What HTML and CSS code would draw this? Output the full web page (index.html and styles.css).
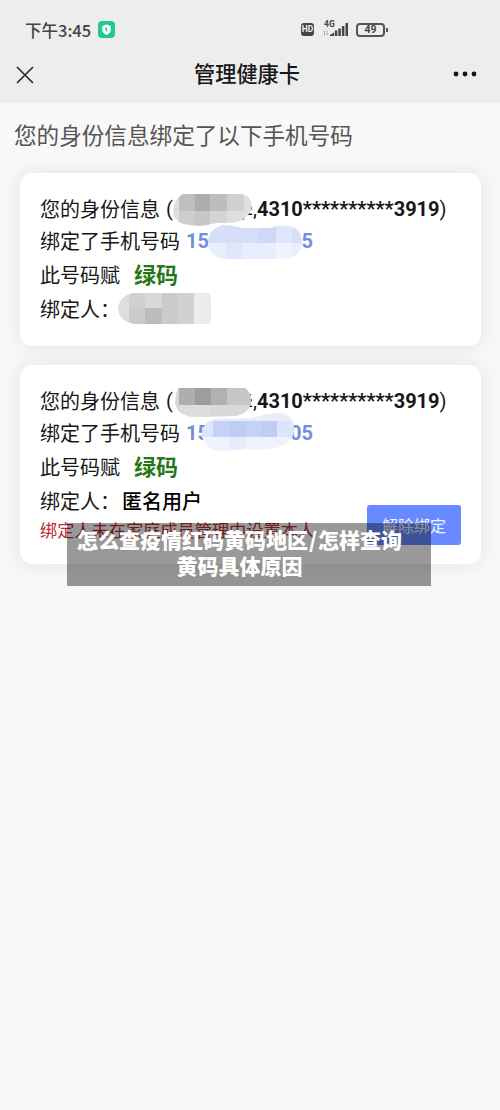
FILE: index.html
```html
<!DOCTYPE html>
<html lang="zh-CN">
<head>
<meta charset="utf-8">
<title>管理健康卡</title>
<link rel="stylesheet" href="styles.css">
</head>
<body>
<header class="top">
  <div class="status">
    <span class="time">下午3:45</span>
    <svg class="shield" width="17" height="17" viewBox="0 0 17 17"><rect width="17" height="17" rx="4" fill="#20cc8b"/><path d="M8.5 3.5 12.7 5v4c0 2.300-1.700 4-4.200 5C6 13 4.300 11.300 4.300 9V5z" fill="#fff"/><path d="M8.500 6.500v4M7 8h2" stroke="#20cc8b" stroke-width="1.300"/></svg>
    <span class="hd">HD</span>
    <span class="signal">
      <span class="net">4G</span>
      <svg width="28" height="16" viewBox="0 0 28 16"><g fill="#444"><path d="M8 14v-1l4-2.500v3.500z"/><rect x="12.800" y="8.500" width="2.500" height="5.500"/><rect x="16.300" y="6.500" width="2.500" height="7.500"/><rect x="19.900" y="4" width="2.500" height="10"/><rect x="23.500" y="1" width="2.500" height="13"/></g><path d="M2.500 14V9L1.500 10M5 8.500V13l1-1" fill="none" stroke="#aaa"/></svg>
    </span>
    <span class="battery">49</span>
  </div>
  <nav class="nav">
    <svg width="18" height="18" viewBox="0 0 18 18"><path d="M1 1 17 17M17 1 1 17" stroke="#2b2b2b" stroke-width="1.700"/></svg>
    <h1 class="title">管理健康卡</h1>
    <svg class="more" width="24" height="6" viewBox="0 0 24 6" fill="#151515"><circle cx="3" cy="3" r="2.400"/><circle cx="12" cy="3" r="2.400"/><circle cx="21" cy="3" r="2.400"/></svg>
  </nav>
</header>
<main class="main">
  <h2 class="intro">您的身份信息绑定了以下手机号码</h2>
  <section class="card">
    <div class="row first"><span class="lead">您的身份信息</span><span class="paren">(</span><span class="name">华</span><span>,</span><b>4310**********3919</b><span>)</span>
      <svg class="mosaic name-mask" width="80" height="33" viewBox="0 0 80 33"><clipPath id="a"><path d="M11 0H69Q77 1 79 8Q81 16 75 22Q69 28 59 29Q43 28 35 31Q26 33 12 30Q1 27 1 17Q2 5 11 0z"/></clipPath><g clip-path="url(#a)"><path fill="#dedede" d="M0 0h80v33H0z"/><path fill="#bfbfbf" d="M7 0h16v17H7z"/><path fill="#adadad" d="M23 0h15v17H23z"/><path fill="#bdbdbd" d="M38 0h17v17H38z"/><path fill="#d0d0d0" d="M55 0h17v17H55z"/><path fill="#cdcdcd" d="M7 17h16v16H7z"/><path fill="#c7c7c7" d="M23 17h15v16H23z"/><path fill="#d5d5d5" d="M38 17h17v16H38z"/></g></svg>
    </div>
    <div class="row second"><span class="lead">绑定了手机号码</span><span class="phone"><b>15</b><b>5</b></span>
      <svg class="mosaic phone-mask" width="94" height="34" viewBox="0 0 94 34"><clipPath id="b"><path d="M15 0Q25 0 35 3H64Q69 0 79 1Q94 2 94 18Q93 32 78 34H17Q1 32 0 18Q0 4 15 0z"/></clipPath><g clip-path="url(#b)"><path fill="#d5dff8" d="M0 0h94v18H0z"/><path fill="#cdd9f7" d="M50 0h18v18H50z"/><path fill="#dfe7fa" d="M68 0h16v18H68z"/><path fill="#e8eefc" d="M0 18h94v16H0z"/><path fill="#dfe7fb" d="M18 18h16v16H18z"/><path fill="#f0f4fe" d="M68 18h16v16H68z"/></g></svg>
    </div>
    <div class="row"><span>此号码赋</span><b class="green">绿码</b></div>
    <div class="row"><span>绑定人：</span>
      <svg class="mosaic owner-mask" width="93" height="31" viewBox="0 0 93 31"><clipPath id="c"><path d="M15 0H92Q94 15 92 31H16Q1 28 0 16Q1 3 15 0z"/></clipPath><g clip-path="url(#c)"><path fill="#dedede" d="M0 0h94v31H0z"/><path fill="#d0d0d0" d="M11 0h16v15H11z"/><path fill="#d8d8d8" d="M27 0h17v15H27z"/><path fill="#cbcbcb" d="M44 0h16v31H44zM11 15h16v16H11z"/><path fill="#bcbcbc" d="M27 15h17v16H27z"/><path fill="#d1d1d1" d="M60 0h16v31H60z"/><path fill="#ececec" d="M76 0h18v31H76z"/></g></svg>
    </div>
  </section>
  <section class="card bound">
    <div class="row first"><span class="lead">您的身份信息</span><span class="paren">(</span><span class="name">华</span><span>,</span><b>4310**********3919</b><span>)</span>
      <svg class="mosaic name-mask-2" width="77" height="29" viewBox="0 0 77 29"><clipPath id="d"><path d="M3 0H70Q77 5 76 16Q73 25 62 28L20 29Q2 28 0 15Q0 7 3 0z"/></clipPath><g clip-path="url(#d)"><path fill="#d8d8d8" d="M0 0h77v29H0z"/><path fill="#aeaeae" d="M4 0h16v17H4z"/><path fill="#9d9d9d" d="M20 0h16v17H20z"/><path fill="#b1b1b1" d="M36 0h16v17H36z"/><path fill="#c6c6c6" d="M52 0h25v17H52z"/><path fill="#ddd" d="M4 17h32v12H4z"/></g></svg>
    </div>
    <div class="row second"><span class="lead">绑定了手机号码</span><span class="phone"><b>15</b><b>05</b></span>
      <svg class="mosaic phone-mask-2" width="95" height="38" viewBox="0 0 95 38"><clipPath id="e"><path d="M12 6L50 5Q65 0 79 0Q92 2 92 17Q91 31 75 34Q60 38 44 36L19 38Q2 35 0 22Q0 10 12 6z"/></clipPath><g clip-path="url(#e)"><path fill="#e9edf8" d="M0 0h95v38H0z"/><path fill="#dce5fb" d="M0 8h95v16H0z"/><path fill="#c4d2f6" d="M11 8h16v16H11zM44 8h31v16H44z"/><path fill="#bdcdf6" d="M27 8h17v16H27zM60 8h15v16H60z"/><path fill="#f0f3fe" d="M0 24h95v14H0z"/><path fill="#e7ecfc" d="M27 24h17v14H27z"/></g></svg>
    </div>
    <div class="row"><span>此号码赋</span><b class="green">绿码</b></div>
    <div class="row"><span>绑定人：</span><span class="owner">匿名用户</span></div>
    <p class="warning">绑定人未在家庭成员管理中设置本人</p>
    <button class="unbind">解除绑定</button>
  </section>
</main>
<div class="caption">怎么查疫情红码黄码地区<span class="slash">/</span>怎样查询<br>黄码具体原因</div>
</body>
</html>
```
FILE: styles.css
```css
* { box-sizing: border-box; }
body {
  position: relative;
  margin: 0;
  width: 500px;
  height: 1110px;
  overflow: hidden;
  background: #f8f8f8;
  color: #171717;
  font-family: Roboto, "Noto Sans CJK SC", sans-serif;
}
svg { display: block; flex: none; }
.top { height: 103px; background: #ededed; }
.status {
  display: flex;
  align-items: center;
  height: 46px;
  padding: 14px 0 0 25px;
  color: #444;
}
.time {
  width: 73px;
  font: 500 16.5px/32px "Noto Sans CJK SC", sans-serif;
  white-space: nowrap;
}
.shield { margin-top: -2px; }
.hd {
  width: 13px;
  height: 13px;
  margin: -1px 0 0 186px;
  border-radius: 3px;
  background: #444;
  color: #eee;
  font: 700 8.5px/13px Roboto, sans-serif;
  text-align: center;
}
.signal { position: relative; margin-left: 8px; }
.net {
  position: absolute;
  top: -2px;
  left: 2px;
  font: 700 8.5px/9px Roboto, sans-serif;
}
.battery {
  position: relative;
  width: 29px;
  height: 14px;
  margin: -1px 0 0 6px;
  border: 2px solid #555;
  border-radius: 4px;
  font: 700 10.5px/10.5px Roboto, sans-serif;
  text-align: center;
}
.battery::after {
  content: "";
  position: absolute;
  right: -5px;
  top: 3px;
  width: 2px;
  height: 4px;
  background: #555;
}
.nav {
  display: flex;
  align-items: center;
  height: 57px;
  padding: 0 23px 0 16px;
}
.title {
  flex: 1;
  margin: 1px 0 0 160px;
  font-size: 21.2px;
  font-weight: 500;
  line-height: 30px;
}
.more { margin-top: -2px; }
.main { padding: 16px 20px 0; }
.intro {
  margin: 0 0 18px -6px;
  color: #555;
  font-size: 22.6px;
  font-weight: 400;
  line-height: 36px;
  white-space: nowrap;
}
.card {
  position: relative;
  width: 461px;
  height: 173px;
  padding: 20px;
  border-radius: 12px;
  background: #fff;
  box-shadow: 0 0 20px rgba(0, 0, 0, .09);
  font-size: 20px;
}
.bound { height: 199px; margin-top: 19px; }
.row {
  position: relative;
  display: flex;
  align-items: center;
  height: 34px;
  white-space: nowrap;
}
.first, .second { height: 32px; }
.lead { margin: -1px 6px 1px 0; }
.paren { width: 7px; }
.name { width: 80px; text-align: right; }
.phone {
  display: flex;
  justify-content: space-between;
  width: 127px;
  color: #718de2;
}
.green { margin: -2px 0 0 14px; color: #267817; font-size: 22px; }
.owner { margin-left: 2px; color: #000; font-weight: 500; }
.mosaic { position: absolute; }
.name-mask { left: 132px; top: 1px; }
.name-mask-2 { left: 135px; top: 3px; }
.phone-mask { left: 168px; top: 0; }
.phone-mask-2 { left: 162px; top: -4px; }
.owner-mask { left: 78px; top: 2px; }
.warning {
  margin: 2px 0 0;
  color: #bb2d35;
  font-size: 17.2px;
  line-height: 24px;
}
.unbind {
  position: absolute;
  right: 20px;
  bottom: 19px;
  width: 94px;
  height: 40px;
  padding: 0;
  border: 0;
  border-radius: 3px;
  background: #678bff;
  color: #eef2ff;
  font: 400 16px/38px "Noto Sans CJK SC", sans-serif;
}
.caption {
  position: absolute;
  left: 67px;
  top: 523px;
  width: 364px;
  height: 63px;
  padding: 3px 29px 0 10px;
  background: rgba(0, 0, 0, .4);
  color: #fff;
  font: 900 21px/26px "Noto Sans CJK SC", sans-serif;
  text-align: center;
  white-space: nowrap;
}
.slash { padding: 0 1px; }
```
